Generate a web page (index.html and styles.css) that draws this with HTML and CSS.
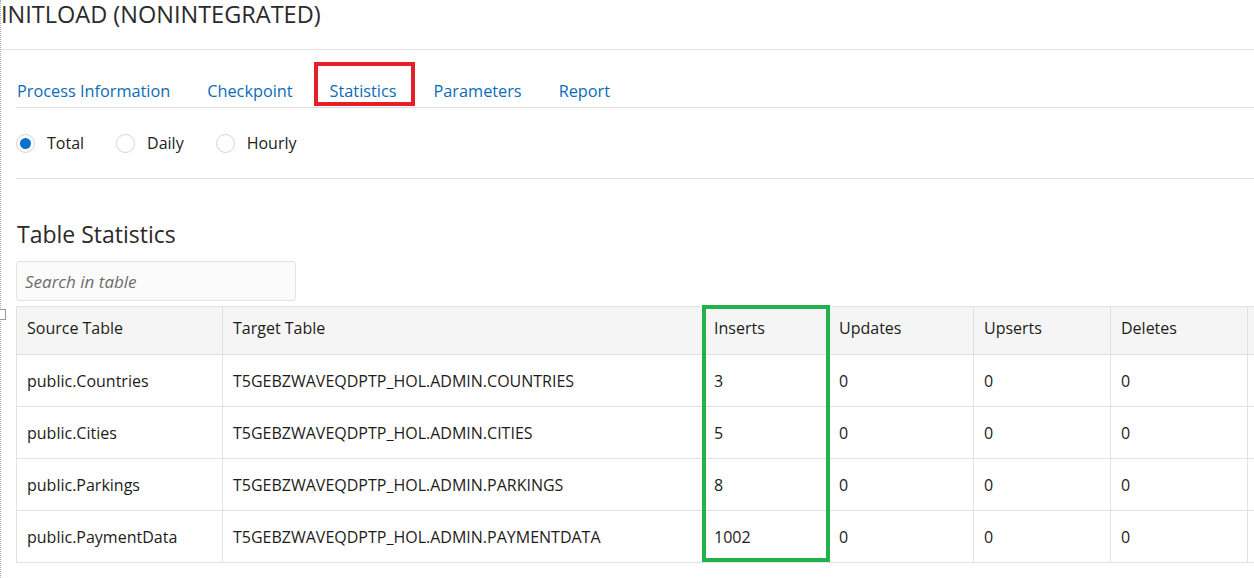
FILE: index.html
```html
<!DOCTYPE html>
<html>
<head>
<meta charset="utf-8">
<link rel="stylesheet" href="styles.css">
</head>
<body>
<div class="page">
  <span class="handle"></span>
  <header class="page-header">
    <h1 class="title">INITLOAD (NONINTEGRATED)</h1>
  </header>
  <div class="content">
    <nav class="tabs">
      <a class="tab">Process Information</a>
      <a class="tab">Checkpoint</a>
      <a class="tab tab-marked">Statistics</a>
      <a class="tab">Parameters</a>
      <a class="tab">Report</a>
    </nav>
    <div class="radios">
      <label class="radio"><span class="radio-dot checked"></span><span>Total</span></label>
      <label class="radio"><span class="radio-dot"></span><span>Daily</span></label>
      <label class="radio"><span class="radio-dot"></span><span>Hourly</span></label>
    </div>
    <h2 class="section-title">Table Statistics</h2>
    <div class="search"><span class="placeholder">Search in table</span></div>
    <div class="table-wrap">
      <table class="stats">
        <colgroup>
          <col class="c-src"><col class="c-tgt"><col class="c-ins"><col class="c-upd"><col class="c-ups"><col class="c-del"><col class="c-more">
        </colgroup>
        <thead>
          <tr><th>Source Table</th><th>Target Table</th><th>Inserts</th><th>Updates</th><th>Upserts</th><th>Deletes</th><th></th></tr>
        </thead>
        <tbody>
          <tr><td>public.Countries</td><td>T5GEBZWAVEQDPTP_HOL.ADMIN.COUNTRIES</td><td>3</td><td>0</td><td>0</td><td>0</td><td></td></tr>
          <tr><td>public.Cities</td><td>T5GEBZWAVEQDPTP_HOL.ADMIN.CITIES</td><td>5</td><td>0</td><td>0</td><td>0</td><td></td></tr>
          <tr><td>public.Parkings</td><td>T5GEBZWAVEQDPTP_HOL.ADMIN.PARKINGS</td><td>8</td><td>0</td><td>0</td><td>0</td><td></td></tr>
          <tr><td>public.PaymentData</td><td>T5GEBZWAVEQDPTP_HOL.ADMIN.PAYMENTDATA</td><td>1002</td><td>0</td><td>0</td><td>0</td><td></td></tr>
        </tbody>
      </table>
      <div class="col-mark"></div>
    </div>
  </div>
</div>
</body>
</html>
```

FILE: styles.css
```css
html, body {
  margin: 0;
  padding: 0;
  background: #ffffff;
  overflow: hidden;
}
body {
  width: 1254px;
  height: 578px;
  font-family: "Open Sans", "Noto Sans", sans-serif;
  color: #161513;
  font-size: 16px;
}
.page {
  position: relative;
  height: 578px;
  border-left: 1px dotted #a8a8a8;
  box-sizing: border-box;
}
.handle {
  position: absolute;
  left: -1px;
  top: 309px;
  width: 5px;
  height: 9px;
  border: 1px solid #9a9a9a;
  border-left: none;
  background: #fff;
}
.page-header {
  height: 49px;
  border-bottom: 1px solid #e3e3e3;
}
.title {
  margin: 0;
  padding-left: 0;
  font-weight: 400;
  font-size: 23.5px;
  line-height: 28px;
  color: #2b2b2b;
}
.content {
  padding-left: 15px;
}
.tabs {
  display: flex;
  gap: 37px;
  padding-top: 29px;
  padding-left: 1px;
  height: 28px;
  border-bottom: 1px solid #dedede;
}
.tab {
  position: relative;
  color: #0a6cb8;
  font-size: 16.3px;
  line-height: 24px;
  height: 24px;
  cursor: pointer;
}
.tab-marked::after {
  content: "";
  position: absolute;
  left: -16px;
  right: -18px;
  top: -17px;
  bottom: -3px;
  border: 4px solid #e51f27;
}
.radios {
  display: flex;
  gap: 32px;
  height: 70px;
  align-items: center;
  border-bottom: 1px solid #e0e0e0;
}
.radio {
  display: flex;
  align-items: center;
  gap: 12px;
  font-size: 16px;
  line-height: 24px;
  color: #222;
}
.radio-dot {
  box-sizing: border-box;
  width: 19px;
  height: 19px;
  border-radius: 50%;
  border: 1px solid #d6d6d6;
  background: #fff;
  position: relative;
}
.radio-dot.checked::after {
  content: "";
  position: absolute;
  left: 3px;
  top: 3px;
  width: 11px;
  height: 11px;
  border-radius: 50%;
  background: #0572ce;
}
.section-title {
  margin: 0;
  padding-top: 38px;
  padding-left: 1px;
  font-weight: 400;
  font-size: 23px;
  line-height: 34px;
  color: #2c2a28;
}
.search {
  margin-top: 10px;
  box-sizing: border-box;
  width: 280px;
  height: 40px;
  border: 1px solid #e4e4e4;
  border-radius: 3px;
  background: #fbfbfb;
  display: flex;
  align-items: center;
  padding-left: 8px;
}
.placeholder {
  font-style: italic;
  color: #6d6d6d;
  font-size: 17px;
}
.table-wrap {
  position: relative;
  margin-top: 5px;
  width: 1240px;
}
.stats {
  border-collapse: collapse;
  table-layout: fixed;
  width: 1375px;
}
.c-src { width: 206px; }
.c-tgt { width: 481px; }
.c-ins { width: 125px; }
.c-upd { width: 145px; }
.c-ups { width: 137px; }
.c-del { width: 137px; }
.c-more { width: 144px; }
.stats th, .stats td {
  border: 1px solid #e1e1e1;
  text-align: left;
  font-weight: 400;
  font-size: 16px;
  padding: 0 10px;
  white-space: nowrap;
  overflow: hidden;
  color: #1d1c1a;
}
.stats th {
  height: 41px;
  padding-bottom: 6px;
  background: #f5f5f5;
}
.stats td {
  height: 51px;
}
.col-mark {
  position: absolute;
  left: 686px;
  top: -1px;
  width: 128px;
  height: 257px;
  box-sizing: border-box;
  border: 4px solid #22b14c;
}
```
